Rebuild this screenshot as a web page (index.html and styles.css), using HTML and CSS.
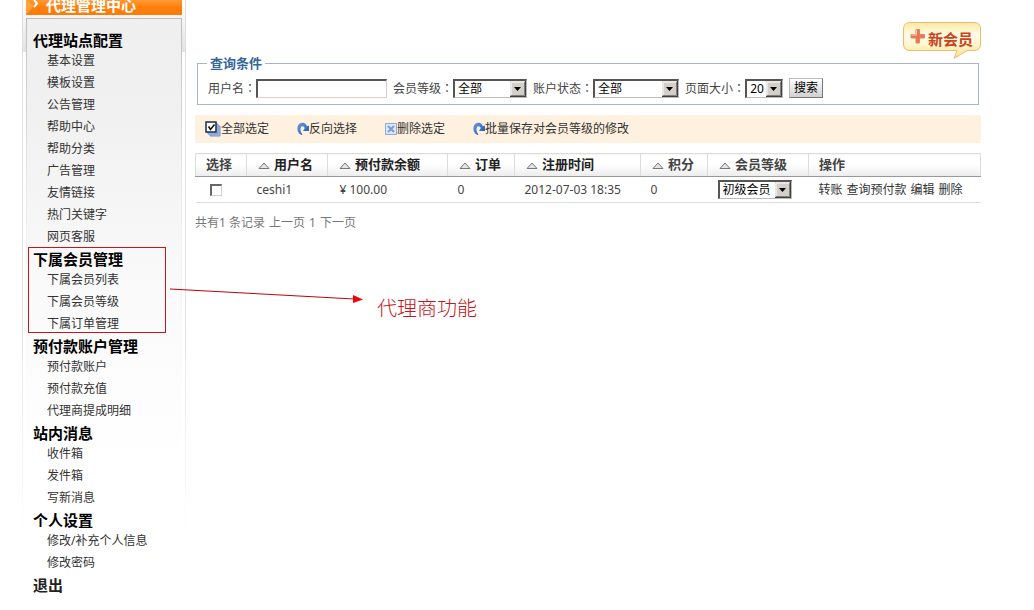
FILE: index.html
```
<!DOCTYPE html>
<html lang="zh-CN">
<head>
<meta charset="utf-8">
<title>代理管理中心</title>
<link rel="stylesheet" href="styles.css">
</head>
<body>
<svg class="defs" width="0" height="0" aria-hidden="true">
  <defs>
    <linearGradient id="blue" x1="0" y1="0" x2="1" y2="1"><stop offset="0" stop-color="#6a9fe0"/><stop offset="1" stop-color="#1f4fb0"/></linearGradient>
    <linearGradient id="bubble" x1="0" y1="0" x2="0" y2="1"><stop offset="0" stop-color="#ffe9a0"/><stop offset=".35" stop-color="#fffbe6"/><stop offset=".6" stop-color="#fff6cf"/><stop offset="1" stop-color="#ffe08a"/></linearGradient>
    <symbol id="sort" viewBox="0 0 12 7"><path d="M1 6.5 6 1 11 6.5Z" fill="#e4e4e4" stroke="#777" stroke-width="1"/></symbol>
    <symbol id="turn" viewBox="0 0 12 14"><path d="M4.500 13C1 11.500 0 8 .5 5 1.200 1.500 4.500 0 7.500 1.200 8.800 1.900 9.500 3 9.800 4.200L12 3.500V9H6L7.800 6C6.500 3.800 4.600 4 3.800 5.600 3 7.500 3.500 10 5.500 12.500Z" fill="url(#blue)"/></symbol>
    <symbol id="arrow" viewBox="0 0 16 16"><path d="M0 0H16V16H0Z" fill="#404040"/><path d="M0 0H15V15H0Z" fill="#d4d0c8"/><path d="M1 14V1H14" fill="none" stroke="#fff"/><path d="M1 14.500H14.500V1" fill="none" stroke="#808080"/><path d="M4 6H11L7.500 10Z" fill="#000"/></symbol>
  </defs>
</svg>
<div class="page">
  <aside class="sidebar">
    <h1 class="side-title"><svg width="16" height="15" viewBox="0 0 16 15"><path d="M0 15 8 6 0 0Z" fill="#ffb04d" opacity=".7"/><path d="M8 0 11 3.500 8 7" fill="none" stroke="#fff" stroke-width="2"/></svg>代理管理中心</h1>
    <nav class="menu">
      <section class="group"><h2>代理站点配置</h2>
        <a href="#">基本设置</a><a href="#">模板设置</a><a href="#">公告管理</a><a href="#">帮助中心</a><a href="#">帮助分类</a><a href="#">广告管理</a><a href="#">友情链接</a><a href="#">热门关键字</a><a href="#">网页客服</a></section>
      <section class="group marked"><h2>下属会员管理</h2>
        <a href="#">下属会员列表</a><a href="#">下属会员等级</a><a href="#">下属订单管理</a>
        <span class="frame"></span>
        <svg class="pointer" width="194" height="16" viewBox="0 0 194 16"><path d="M0 2 184 12" stroke="#c00008" fill="none"/><path d="M183 8 193 12.500 183 16Z" fill="#f00008"/></svg>
        <span class="note">代理商功能</span>
      </section>
      <section class="group"><h2>预付款账户管理</h2>
        <a href="#">预付款账户</a><a href="#">预付款充值</a><a href="#">代理商提成明细</a></section>
      <section class="group"><h2>站内消息</h2>
        <a href="#">收件箱</a><a href="#">发件箱</a><a href="#">写新消息</a></section>
      <section class="group"><h2>个人设置</h2>
        <a href="#">修改/补充个人信息</a><a href="#">修改密码</a></section>
      <section class="group"><h2><a class="exit" href="#">退出</a></h2></section>
    </nav>
  </aside>
  <main class="main">
    <div class="top">
      <button class="new" type="button">
        <svg class="bubble" width="78" height="38" viewBox="0 0 78 38"><path d="M7 .5H71Q77.500.5 77.500 7V22Q77.500 28.500 71 28.500H64L51 36.500 54 28.500H7Q.5 28.500.5 22V7Q.5.5 7 .5Z" fill="url(#bubble)" stroke="#e9bd6c"/><path d="M13 7.500H16.500V12.500H21.500V16H16.500V21H13V16H8V12.500H13Z" fill="#f3734a" stroke="#d9886b"/><path d="M13.500 8V13H8.500" fill="none" stroke="#ffd0b8"/></svg>
        <span>新会员</span>
      </button>
    </div>
    <fieldset class="search">
      <legend>查询条件</legend>
      <form class="fields">
        <div class="field"><label for="user">用户名<span class="colon" lang="zh-TW">：</span></label><input class="text" id="user" type="text"></div>
        <div class="field"><label for="level">会员等级<span class="colon" lang="zh-TW">：</span></label><span class="pick w-level"><select id="level"><option>全部</option></select><svg><use href="#arrow"/></svg></span></div>
        <div class="field"><label for="state">账户状态<span class="colon" lang="zh-TW">：</span></label><span class="pick w-state"><select id="state"><option>全部</option></select><svg><use href="#arrow"/></svg></span></div>
        <div class="field"><label for="size">页面大小<span class="colon" lang="zh-TW">：</span></label><span class="pick w-size"><select id="size"><option>20</option></select><svg><use href="#arrow"/></svg></span></div>
        <button class="go" type="button">搜索</button>
      </form>
    </fieldset>
    <div class="tools">
      <a href="#"><svg width="16" height="16" viewBox="0 0 16 16"><path d="M5 5H15V15H5Z" fill="#a9c4ec" stroke="#7191c8"/><path d="M3 3H13V13H3Z" fill="#a9c4ec" stroke="#7191c8"/><path d="M1 1H11V11H1Z" fill="#fff" stroke="#1c2a44" stroke-width="1.500"/><path d="M3.500 5.500 5.500 8.500 9.500 3.500" fill="none" stroke="#111" stroke-width="1.500"/></svg>全部选定</a>
      <a href="#"><svg width="12" height="14"><use href="#turn"/></svg>反向选择</a>
      <a href="#"><svg width="12" height="12" viewBox="0 0 12 12"><path d="M.5.5H11.500V11.500H.5Z" fill="#dce8f8" stroke="#8aa9d8"/><path d="M3 3 9 9M9 3 3 9" stroke="#7a9ed2" stroke-width="2"/></svg>删除选定</a>
      <a href="#"><svg width="12" height="14"><use href="#turn"/></svg>批量保存对会员等级的修改</a>
    </div>
    <table class="list">
      <colgroup><col class="c1"><col class="c2"><col class="c3"><col class="c4"><col class="c5"><col class="c4"><col class="c7"><col></colgroup>
      <thead><tr>
        <th class="dim">选择</th>
        <th><svg><use href="#sort"/></svg>用户名</th>
        <th><svg><use href="#sort"/></svg>预付款余额</th>
        <th><svg><use href="#sort"/></svg>订单</th>
        <th><svg><use href="#sort"/></svg>注册时间</th>
        <th class="dim"><svg><use href="#sort"/></svg>积分</th>
        <th class="dim"><svg><use href="#sort"/></svg>会员等级</th>
        <th class="dim">操作</th>
      </tr></thead>
      <tbody><tr>
        <td class="tick"><input type="checkbox" aria-label="选择 ceshi1"></td>
        <td>ceshi1</td>
        <td class="money">¥ 100.00</td>
        <td>0</td>
        <td>2012-07-03 18:35</td>
        <td>0</td>
        <td><span class="pick w-level"><select aria-label="会员等级"><option>初级会员</option></select><svg><use href="#arrow"/></svg></span></td>
        <td><div class="ops"><a href="#">转账</a><a href="#">查询预付款</a><a href="#">编辑</a><a href="#">删除</a></div></td>
      </tr></tbody>
    </table>
    <p class="pager"><span>共有1 条记录</span><a href="#">上一页</a><span>1</span><a href="#">下一页</a></p>
  </main>
</div>
</body>
</html>
```
FILE: styles.css
```
* { box-sizing: border-box; }
body {
  margin: 0;
  background: #fff;
  color: #444;
  font: 12px/22px "Noto Sans", "Noto Sans CJK SC", sans-serif;
}
h1, h2, p { margin: 0; }
a { color: inherit; text-decoration: none; }
button, input, select { margin: 0; font: inherit; }
.defs { position: absolute; }
.page { display: flex; align-items: flex-start; }

.sidebar {
  width: 164px;
  margin-left: 22px;
  flex: none;
  padding: 0 4px;
  background:
    linear-gradient(#e0e0e0, #e4e4e4 60%, #fff) 0 0 / 1px 540px no-repeat,
    linear-gradient(#e0e0e0, #e4e4e4 60%, #fff) 100% 0 / 1px 540px no-repeat,
    linear-gradient(#fff, #e2e2e2) 0 0 / 100% 52px no-repeat;
}
.side-title {
  display: flex;
  height: 15px;
  gap: 4px;
  background: linear-gradient(#ff9a35, #ff7f0a 50%, #ff7a08);
  color: #fff;
  font-size: 15px;
  line-height: 11px;
  white-space: nowrap;
}
.menu {
  margin-top: 3px;
  padding-top: 10px;
  border-top: 1px solid #b9bdc4;
  background:
    linear-gradient(#b9bdc4, #eee 45%, #fff) 0 0 / 1px 400px no-repeat,
    linear-gradient(#b9bdc4, #eee 45%, #fff) 100% 0 / 1px 400px no-repeat,
    linear-gradient(#efefef, #f0f0f0 80px, #fafafa 280px, #fff 450px);
}
.group h2 {
  padding: 2px 0 0 7px;
  color: #000;
  font-size: 15px;
  line-height: 19px;
}
.group > a {
  display: block;
  padding-left: 21px;
  color: #333;
}
.group .exit { color: #222; }
.marked { position: relative; }
.frame {
  position: absolute;
  inset: -1px 16px 2px 2px;
  border: 1px solid #c4161c;
  pointer-events: none;
}
.pointer { position: absolute; left: 144px; top: 39px; }
.note {
  position: absolute;
  left: 351px;
  top: 46px;
  color: #c8161c;
  font-size: 20px;
  font-weight: 300;
  line-height: 30px;
  white-space: nowrap;
}

.main { flex: 1; min-width: 0; margin: 22px 53px 0 9px; }
.top { display: flex; justify-content: flex-end; height: 34px; }
.new {
  position: relative;
  width: 78px;
  height: 38px;
  padding: 3px 8px 0 0;
  border: 0;
  background: none;
  color: #c9441a;
  font-size: 15px;
  font-weight: bold;
  line-height: 29px;
  text-align: right;
  display: block;
}
.new span { position: relative; display: block; height: 35px; }
.bubble { position: absolute; left: 0; top: 0; }
.search {
  margin: 0 2px;
  padding: 0 10px 6px;
  border: 1px solid #a7b3d0;
}
.search legend {
  margin-left: -1px;
  padding: 0 3px;
  color: #336699;
  font-size: 13px;
  font-weight: bold;
  line-height: 15px;
}
.fields { display: flex; align-items: center; gap: 6px; height: 20px; margin-top: 7px; }
.field { display: flex; align-items: center; white-space: nowrap; }
.colon { font-family: "Noto Sans CJK TC", sans-serif; }
.text {
  width: 131px;
  height: 19px;
  border: 1px solid #d4d0c8;
  border-top: 2px solid #555;
  border-left: 2px solid #555;
  background: #fff;
}
.pick {
  display: block;
  position: relative;
  height: 19px;
  border: 1px solid #bbb;
  border-top: 2px solid #555;
  border-left: 2px solid #555;
}
.pick select {
  appearance: none;
  display: block;
  width: 100%;
  height: 16px;
  padding: 0 3px;
  border: 0;
  background: #fff;
  color: #000;
  line-height: 16px;
}
.pick svg { position: absolute; right: 0; top: 0; width: 16px; height: 16px; pointer-events: none; }
.w-level { width: 74px; }
.w-state { width: 86px; }
.w-size { width: 38px; }
.go {
  width: 34px;
  height: 20px;
  padding: 0;
  border: 1px solid #777;
  border-top-color: #bbb;
  border-left-color: #bbb;
  background: linear-gradient(#fff, #d0d0d0);
  color: #000;
  line-height: 18px;
}
.tools {
  display: flex;
  gap: 28px;
  height: 28px;
  margin-top: 10px;
  padding: 0 10px;
  background: #fff1df;
  color: #333;
  line-height: 28px;
}
.tools a { display: flex; align-items: center; }
.list {
  width: 100%;
  margin-top: 10px;
  border-collapse: collapse;
  table-layout: fixed;
}
.c1 { width: 51px; }
.c2 { width: 81px; }
.c3 { width: 120px; }
.c4 { width: 67px; }
.c5 { width: 126px; }
.c7 { width: 101px; }
.list th {
  height: 23px;
  padding: 0 0 2px 10px;
  border: 1px solid #dcdcdc;
  border-bottom-color: #999;
  background: linear-gradient(#fff 45%, #ececec);
  color: #222;
  font-size: 13px;
  line-height: 20px;
  text-align: left;
  white-space: nowrap;
}
.list th.dim { color: #444; }
.list th svg { width: 12px; height: 7px; margin: 0 4px 0 1px; }
.list td {
  height: 26px;
  padding: 0 0 0 10px;
  border-bottom: 1px solid #ddd;
  white-space: nowrap;
}
.list td.money { padding-left: 12px; }
.list td.tick { padding-left: 14px; }
.tick input {
  appearance: none;
  display: block;
  width: 12px;
  height: 12px;
  border: 1px solid #d4d0c8;
  border-top: 2px solid #666;
  border-left: 2px solid #666;
}
.ops, .pager { display: flex; gap: 4px; }
.ops { color: #333; }
.pager { margin-top: 9px; color: #777; }
```
